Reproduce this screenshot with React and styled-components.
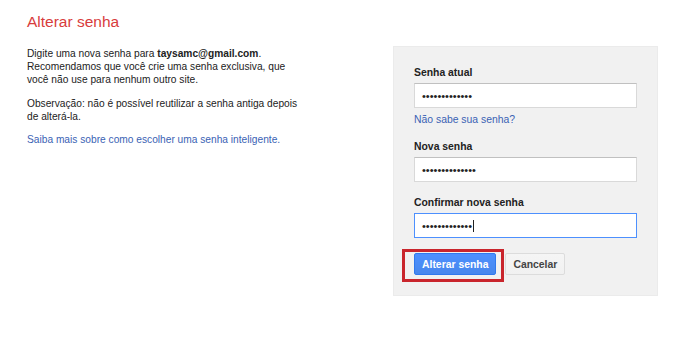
import React from 'react';
import styled, { createGlobalStyle } from 'styled-components';

const GlobalStyle = createGlobalStyle`
  html, body {
    margin: 0;
    padding: 0;
    background: #fff;
  }
  body {
    font-family: "Liberation Sans", Arial, sans-serif;
    color: #222;
  }
`;

const Page = styled.div`
  display: flex;
  align-items: flex-start;
  padding: 13px 0 0 27px;
`;

const Intro = styled.div`
  width: 276px;
  flex-shrink: 0;
`;

const Title = styled.h1`
  margin: 0 0 16px;
  font-size: 15.5px;
  line-height: 18px;
  font-weight: normal;
  color: #d83c3c;
`;

const Text = styled.p`
  margin: 0 0 10.5px;
  font-size: 10.2px;
  line-height: 13px;
  color: #222;
`;

const Link = styled.a`
  color: #3a62b4;
  text-decoration: none;
  font-size: ${(p) => p.size || '10.2px'};
  line-height: 13px;
  cursor: pointer;
`;

const Panel = styled.form`
  margin: 33px 0 0 90px;
  width: 265px;
  box-sizing: border-box;
  padding: 19px 20px 20px;
  background: #f1f1f1;
  border: 1px solid #ebebeb;
`;

const Field = styled.div`
  display: flex;
  flex-direction: column;
  & + & {
    margin-top: 14px;
  }
`;

const Label = styled.label`
  font-size: 10.4px;
  line-height: 13px;
  font-weight: bold;
  color: #222;
  margin-bottom: 4px;
`;

const PasswordBox = styled.div`
  height: 25px;
  box-sizing: border-box;
  display: flex;
  align-items: center;
  padding: 0 7px;
  background: #fff;
  border: 1px solid ${(p) => (p.focused ? '#4d90fe' : '#d9d9d9')};
  border-top-color: ${(p) => (p.focused ? '#4d90fe' : '#c0c0c0')};
  font-size: 11px;
  color: #222;
`;

const Caret = styled.span`
  display: inline-block;
  width: 1px;
  height: 12px;
  margin-left: 1px;
  background: #222;
`;

const HelpLink = styled(Link)`
  margin-top: 5px;
`;

const Actions = styled.div`
  display: flex;
  align-items: center;
  margin-top: 15px;
`;

const Highlight = styled.span`
  display: inline-flex;
  border: 3px solid #c9252c;
  padding: 1px 5px 4px 9px;
  margin: -4px 0 -7px -12px;
`;

const Button = styled.button`
  height: 22px;
  padding: 0 7px;
  border-radius: 2px;
  font-family: inherit;
  font-size: 10.4px;
  font-weight: bold;
  cursor: pointer;
  border: 1px solid ${(p) => (p.primary ? '#3079ed' : '#dcdcdc')};
  color: ${(p) => (p.primary ? '#fff' : '#444')};
  background: ${(p) =>
    p.primary
      ? 'linear-gradient(#4d90fe, #4787ed)'
      : 'linear-gradient(#f5f5f5, #f1f1f1)'};
  margin-left: ${(p) => p.gap || '0'};
`;

const bullets = (n) => '\u2022'.repeat(n);

function PasswordField({ label, length, focused, children }) {
  return (
    <Field>
      <Label>{label}</Label>
      <PasswordBox focused={focused}>
        {bullets(length)}
        {focused && <Caret />}
      </PasswordBox>
      {children}
    </Field>
  );
}

export default function App() {
  return (
    <>
      <GlobalStyle />
      <Page>
        <Intro>
          <Title>Alterar senha</Title>
          <Text>
            Digite uma nova senha para <b>taysamc@gmail.com</b>.<br />
            Recomendamos que você crie uma senha exclusiva, que você não use para nenhum outro site.
          </Text>
          <Text>Observação: não é possível reutilizar a senha antiga depois de alterá-la.</Text>
          <Text>
            <Link>Saiba mais sobre como escolher uma senha inteligente.</Link>
          </Text>
        </Intro>
        <Panel onSubmit={(e) => e.preventDefault()}>
          <PasswordField label="Senha atual" length={13}>
            <HelpLink size="10.4px">Não sabe sua senha?</HelpLink>
          </PasswordField>
          <PasswordField label="Nova senha" length={14} />
          <PasswordField label="Confirmar nova senha" length={13} focused />
          <Actions>
            <Highlight>
              <Button primary type="submit">Alterar senha</Button>
            </Highlight>
            <Button type="button" gap="1px">Cancelar</Button>
          </Actions>
        </Panel>
      </Page>
    </>
  );
}
